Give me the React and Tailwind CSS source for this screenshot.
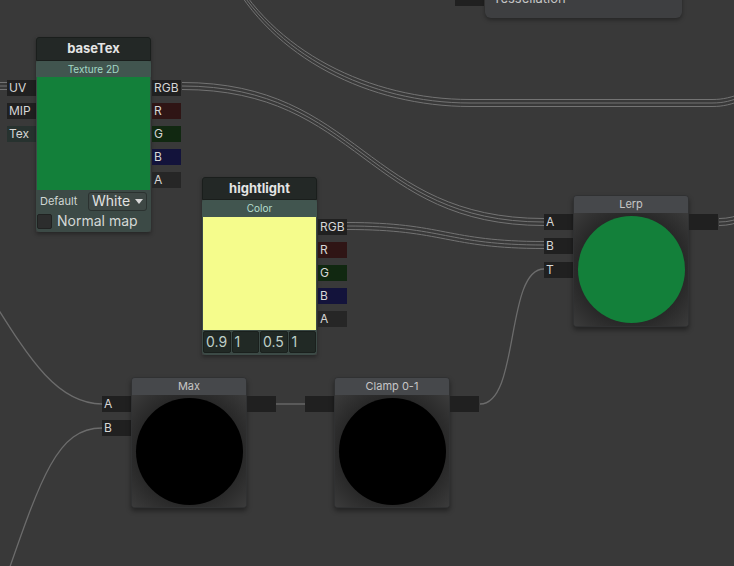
import React from 'react';

const FONT = { fontFamily: 'Inter, "Noto Sans", sans-serif' };

// Wires drawn below the nodes
const tripleWires = [
  'M-20 86 L7 86',
  'M228 -30 C272 55, 370 103, 470 103 L712 103 C724 103, 730 101, 745 96',
  'M182 86 C360 86, 366 222, 544 222',
  'M347 226 C445 226, 446 245, 544 245',
  'M719 222 C738 222, 750 214, 770 200',
];

const singleWires = [
  'M276 404 L305 404',
  'M480 404 C520 404, 505 269, 544 269',
  'M-40 250 C15 330, 45 404, 102 404',
  'M-5 610 C40 480, 55 428, 102 428',
];

function Wires() {
  return (
    <svg className="absolute inset-0" width="734" height="566" viewBox="0 0 734 566" fill="none">
      {tripleWires.map((d, i) => (
        <g key={i} stroke="#737373" strokeWidth="1">
          <path d={d} transform="translate(0,-3.5)" />
          <path d={d} />
          <path d={d} transform="translate(0,3.5)" />
        </g>
      ))}
      {singleWires.map((d, i) => (
        <path key={i} d={d} stroke="#6c6c6c" strokeWidth="1.3" />
      ))}
    </svg>
  );
}

const portColors = {
  dark: 'bg-[#202020]',
  tex: 'bg-[#27322f]',
  r: 'bg-[#2f1515]',
  g: 'bg-[#112811]',
  b: 'bg-[#13133b]',
  a: 'bg-[#262626]',
};

function Port({ label, color = 'dark' }) {
  return (
    <div className={`w-[29px] h-4 pl-[2px] text-[12px] leading-4 text-[#d6d6d6] ${portColors[color]}`}>
      {label}
    </div>
  );
}

const rgbaPorts = [
  ['RGB', 'dark'],
  ['R', 'r'],
  ['G', 'g'],
  ['B', 'b'],
  ['A', 'a'],
];

function TextureNode() {
  return (
    <div className="absolute left-[7px] top-[37px] flex items-start">
      <div className="mt-[43px] flex flex-col gap-[7px]">
        <Port label="UV" />
        <Port label="MIP" />
        <Port label="Tex" color="tex" />
      </div>
      <div className="w-[115px] flex flex-col shadow-[0_2px_4px_rgba(0,0,0,0.35)]">
        <div className="h-6 rounded-t-[3px] bg-[#232826] border border-[#1a1e1c] flex items-center justify-center text-[13px] font-bold text-[#e4e4e4]">
          baseTex
        </div>
        <div className="h-[171px] rounded-b-[4px] bg-[#3c4a46] flex flex-col">
          <div className="h-4 bg-[#41554f] rounded-t-[3px] flex items-center justify-center text-[10px] text-[#a3d9c6]">
            Texture 2D
          </div>
          <div className="mx-px h-[113px] bg-[#13803a]" />
          <div className="flex items-center h-5 pl-1 pr-1 mt-px">
            <span className="text-[11px] text-[#cfd6d3]">Default</span>
            <div className="ml-auto w-[59px] h-[19px] rounded-[3px] bg-[#3e4845] border border-[#2b3230] flex items-center pl-[3px] gap-[5px] text-[14px] leading-none text-[#e2e2e2]">
              White
              <svg width="8" height="5" viewBox="0 0 8 5"><path d="M0 0 L8 0 L4 5 Z" fill="#d8d8d8" /></svg>
            </div>
          </div>
          <div className="flex items-center h-4 pl-px gap-[5px] mt-[2px]">
            <div className="w-[15px] h-[15px] rounded-[2px] bg-[#2c2d2d] border border-[#202221]" />
            <span className="text-[14px] leading-none text-[#d4d8d6]">Normal map</span>
          </div>
        </div>
      </div>
      <div className="ml-px mt-[43px] flex flex-col gap-[7px]">
        {rgbaPorts.map(([l, c]) => (
          <Port key={l} label={l} color={c} />
        ))}
      </div>
    </div>
  );
}

function ColorNode() {
  const fields = ['0.9', '1', '0.5', '1'];
  return (
    <div className="absolute left-[202px] top-[177px] flex items-start">
      <div className="w-[115px] flex flex-col shadow-[0_2px_4px_rgba(0,0,0,0.35)]">
        <div className="h-[23px] rounded-t-[3px] bg-[#232826] border border-[#1a1e1c] flex items-center justify-center text-[13px] font-bold text-[#e4e4e4]">
          hightlight
        </div>
        <div className="h-[155px] rounded-b-[4px] bg-[#3c4a46] flex flex-col">
          <div className="h-[17px] bg-[#41554f] rounded-t-[3px] flex items-center justify-center text-[10px] text-[#b6dfcf]">
            Color
          </div>
          <div className="mx-px h-[113px] bg-[#f5fc8c]" />
          <div className="flex gap-px px-px mt-px">
            {fields.map((f, i) => (
              <div
                key={i}
                className="flex-1 h-[22px] rounded-[2px] bg-[#212925] border border-[#1a201d] pl-[2px] text-[14px] leading-5 text-[#bfcfc8]"
              >
                {f}
              </div>
            ))}
          </div>
        </div>
      </div>
      <div className="ml-px mt-[42px] flex flex-col gap-[7px]">
        {rgbaPorts.map(([l, c]) => (
          <Port key={l} label={l} color={c} />
        ))}
      </div>
    </div>
  );
}

function OpNode({ left, top, title, inputs, circle, h }) {
  return (
    <div className="absolute flex items-start" style={{ left, top }}>
      <div className="mt-[19px] flex flex-col gap-2 w-[29px]">
        {inputs.map((l, i) => (
          <Port key={i} label={l} />
        ))}
      </div>
      <div
        className="w-[116px] rounded-[4px] bg-[#404143] border border-[#303132] flex flex-col overflow-hidden shadow-[0_3px_5px_rgba(0,0,0,0.4)]"
        style={{ height: h }}
      >
        <div className="h-[17px] shrink-0 bg-[#46484b] flex items-center justify-center text-[11px] text-[#c6c6c6]">
          {title}
        </div>
        <div className="flex-1 bg-[radial-gradient(circle,#1c1c1c_45%,#3b3b3b_100%)] flex items-center justify-center">
          <div className={`w-[107px] h-[107px] rounded-full ${circle}`} />
        </div>
      </div>
      <div className="mt-[19px] w-[29px]">
        <Port label="" />
      </div>
    </div>
  );
}

function TessellationNode() {
  return (
    <div className="absolute left-[455px] top-[-30px] flex items-start">
      <div className="mt-[20px]">
        <Port label="" />
      </div>
      <div className="ml-px w-[197px] h-12 rounded-b-[6px] bg-[#3e3f41] shadow-[0_2px_4px_rgba(0,0,0,0.35)] pt-[20px] pl-2 text-[13px] leading-4 text-[#c4c4c4]">
        Tessellation
      </div>
    </div>
  );
}

export default function App() {
  return (
    <div className="relative w-[734px] h-[566px] overflow-hidden bg-[#393939]" style={FONT}>
      <Wires />
      <TessellationNode />
      <TextureNode />
      <ColorNode />
      <OpNode left={544} top={195} h={132} title="Lerp" inputs={['A', 'B', 'T']} circle="bg-[#13803a]" />
      <OpNode left={102} top={377} h={131} title="Max" inputs={['A', 'B']} circle="bg-black" />
      <OpNode left={305} top={377} h={131} title="Clamp 0-1" inputs={['']} circle="bg-black" />
    </div>
  );
}
